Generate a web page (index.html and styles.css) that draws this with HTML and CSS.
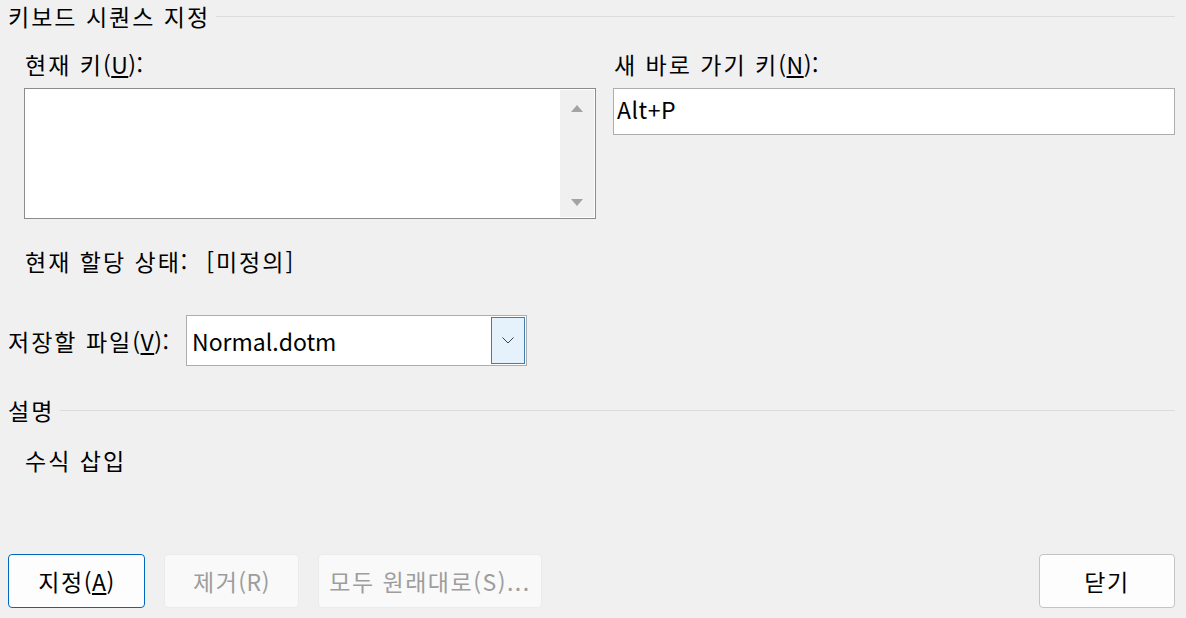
FILE: index.html
```html
<!DOCTYPE html>
<html lang="ko">
<head>
<meta charset="utf-8">
<link rel="stylesheet" href="styles.css">
</head>
<body>
<div class="dialog">
  <div class="group-head"><span class="group-title">키보드 시퀀스 지정</span><span class="rule"></span></div>
  <div class="keys">
    <div class="col">
      <div class="label">현재 키<span class="mn">(<u>U</u>):</span></div>
      <div class="listbox">
        <div class="list-area"></div>
        <div class="vscroll">
          <span class="arrow up"></span>
          <span class="arrow down"></span>
        </div>
      </div>
    </div>
    <div class="col">
      <div class="label">새 바로 가기 키<span class="mn">(<u>N</u>):</span></div>
      <div class="textbox">Alt+P</div>
    </div>
  </div>
  <div class="status">현재 할당 상태:&nbsp;&nbsp;[미정의]</div>
  <div class="save-row">
    <span class="save-label">저장할 파일<span class="mn">(<u>V</u>):</span></span>
    <div class="combo">
      <span class="combo-value">Normal.dotm</span>
      <span class="combo-btn"><svg width="12" height="7" viewBox="0 0 12 7"><path d="M0.5 0.5l5.5 5.5 5.5-5.5" fill="none" stroke="#404040" stroke-width="1"/></svg></span>
    </div>
  </div>
  <div class="group-head desc-head"><span class="group-title">설명</span><span class="rule"></span></div>
  <div class="desc">수식 삽입</div>
  <div class="footer">
    <div class="btn-group">
      <button class="btn primary w137">지정<span class="mn">(<u>A</u>)</span></button>
      <button class="btn disabled w135">제거<span class="mn">(R)</span></button>
      <button class="btn disabled w224">모두 원래대로(S)...</button>
    </div>
    <button class="btn w136">닫기</button>
  </div>
</div>
</body>
</html>
```

FILE: styles.css
```css
html, body {
  margin: 0;
  padding: 0;
  background: #f0f0f0;
}
body {
  font-family: "Noto Sans CJK KR", "Noto Sans", sans-serif;
  font-size: 23px;
  color: #000;
  letter-spacing: 2px;
}
.mn {
  letter-spacing: 0.5px;
}
.dialog {
  height: 618px;
  display: flex;
  flex-direction: column;
  box-sizing: border-box;
  padding: 0 11px 10px 8px;
}
.group-head {
  display: flex;
  align-items: center;
  height: 32px;
  line-height: 32px;
}
.group-title {
  white-space: nowrap;
  padding-right: 6px;
}
.rule {
  flex: 1;
  height: 1px;
  background: #dcdcdc;
}
.keys {
  display: grid;
  grid-template-columns: 572px 562px;
  column-gap: 17px;
  margin-top: 16px;
  padding-left: 16px;
}
.label {
  height: 32px;
  line-height: 32px;
  margin-bottom: 8px;
  padding-left: 1px;
}
.listbox {
  height: 131px;
  box-sizing: border-box;
  border: 1px solid #8c8c8c;
  background: #fff;
  display: flex;
  padding: 1px;
}
.list-area {
  flex: 1;
}
.vscroll {
  width: 34px;
  background: #f0f0f0;
  display: flex;
  flex-direction: column;
  justify-content: space-between;
  align-items: center;
  padding: 15px 0 11px;
  box-sizing: border-box;
}
.arrow {
  width: 0;
  height: 0;
  border-left: 6px solid transparent;
  border-right: 6px solid transparent;
}
.arrow.up {
  border-bottom: 7px solid #a3a3a3;
}
.arrow.down {
  border-top: 7px solid #a3a3a3;
}
.textbox {
  height: 47px;
  box-sizing: border-box;
  border: 1px solid #adadad;
  background: #fff;
  padding: 0 3px;
  line-height: 40px;
  letter-spacing: 0.5px;
}
.status {
  margin-top: 26px;
  padding-left: 17px;
  height: 32px;
  line-height: 32px;
}
.save-row {
  margin-top: 38px;
  display: flex;
  align-items: center;
  height: 51px;
}
.save-label {
  width: 178px;
  white-space: nowrap;
}
.combo {
  width: 341px;
  height: 51px;
  box-sizing: border-box;
  border: 1px solid #adadad;
  background: #fff;
  display: flex;
  align-items: center;
  padding: 1px;
}
.combo-value {
  flex: 1;
  padding-left: 4px;
  letter-spacing: 0;
}
.combo-btn {
  width: 34px;
  height: 47px;
  box-sizing: border-box;
  border: 1px solid #3c7fb1;
  background: #e5f1fb;
  display: flex;
  align-items: center;
  justify-content: center;
}
.desc-head {
  margin-top: 28px;
}
.desc {
  margin-top: 18px;
  padding-left: 17px;
  height: 32px;
  line-height: 32px;
}
.footer {
  margin-top: auto;
  display: flex;
  justify-content: space-between;
  align-items: flex-end;
}
.btn-group {
  display: flex;
  gap: 19px;
}
.btn {
  font-family: inherit;
  font-size: 23px;
  letter-spacing: 1.5px;
  height: 54px;
  box-sizing: border-box;
  border: 1px solid #c4c4c4;
  border-radius: 4px;
  background: #fdfdfd;
  color: #000;
  padding: 0;
}
.btn.primary {
  border-color: #0067c0;
}
.btn.disabled {
  border-color: #ebebeb;
  background: #f9f9f9;
  color: #9d9d9d;
}
.w137 { width: 137px; }
.w135 { width: 135px; }
.w224 { width: 224px; }
.w136 { width: 136px; }
```
